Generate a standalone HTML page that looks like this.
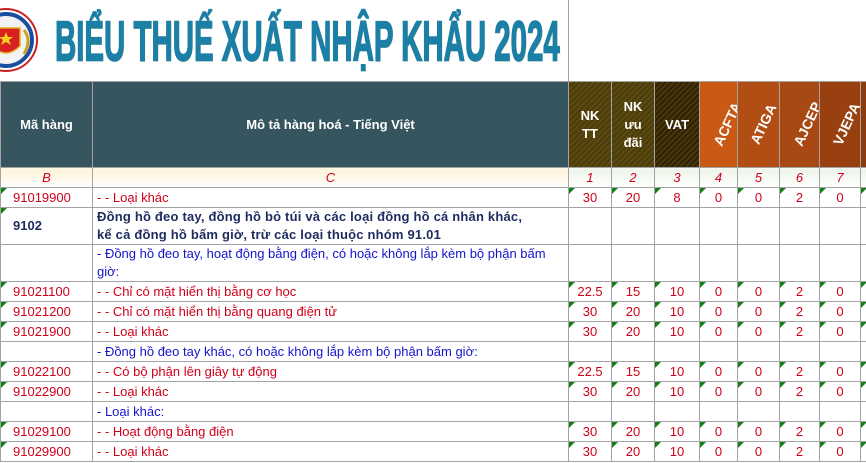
<!DOCTYPE html>
<html><head><meta charset="utf-8"><style>
*{margin:0;padding:0;box-sizing:border-box}
body{width:866px;height:463px;overflow:hidden;background:#fff;font-family:"Liberation Sans",sans-serif;position:relative}
.title{position:absolute;left:55px;top:9px;width:503px;height:64px;overflow:visible}
.title span{display:inline-block;font-family:"Liberation Sans Narrow","Liberation Sans",sans-serif;font-weight:bold;font-size:54px;color:#1b7fa6;letter-spacing:0px;transform-origin:0 0;transform:scaleX(0.545) scaleY(1.05);white-space:nowrap;text-shadow:1px 1px 0 #e8c9a8;-webkit-text-stroke:1.5px #1b7fa6}
.vline{position:absolute;left:568px;top:0;width:1px;height:81px;background:#a0a0a0}
table{position:absolute;left:0;top:81px;border-collapse:collapse;table-layout:fixed;width:880px}
td{border:1px solid #a3a3a3;font-size:13px;color:#d0001a;padding:0 4px;overflow:hidden;white-space:nowrap;position:relative}
tr.h td{height:86px;color:#fff;font-weight:bold;text-align:center;font-size:13px;line-height:18px}
.st1{background:repeating-linear-gradient(135deg,#2f5a5a 0 2px,#3c4f63 2px 4px)}
.st2{background:repeating-linear-gradient(135deg,#5c4a10 0 2px,#4a3c0c 2px 4px)}
.st3{background:repeating-linear-gradient(135deg,#4a380a 0 2px,#2e2206 2px 4px)}
.rot{display:inline-block;transform:rotate(-65deg);font-size:14px}
tr.n td{height:20px;text-align:center;font-style:italic;background:linear-gradient(#eef5ea,#fff)}
tr.n td.y{background:linear-gradient(#fff2d8,#fff)}
tr.r td{height:20px}
td.c{text-align:center}
td.k{padding-left:12px}
td.t::before{content:"";position:absolute;left:0;top:0;border-top:6px solid #128012;border-right:6px solid transparent}
.b{color:#1d2b5e;font-weight:bold}
td.b2{letter-spacing:0.2px}
.bl{color:#1515cc}
tr.tw td{height:37px;white-space:normal;line-height:18px}
</style></head><body>
<svg style="position:absolute;left:0;top:8px" width="40" height="65" viewBox="0 0 40 65">
<circle cx="6" cy="32" r="31" fill="#fff" stroke="#c22" stroke-width="2"/>
<circle cx="6" cy="32" r="26" fill="#f3f3f3" stroke="#1a4fa0" stroke-width="4"/>
<path d="M-8 20 L20 20 L20 38 Q6 52 -8 38Z" fill="#d82020" stroke="#e6b020" stroke-width="1.5"/>
<polygon points="6,24 8,29 13,29 9,32 11,37 6,34 1,37 3,32 -1,29 4,29" fill="#f5d020"/>
<path d="M24 22 Q32 32 24 46" stroke="#d0a020" stroke-width="3" fill="none"/>
</svg>
<div class="title"><span>BIỂU THUẾ XUẤT NHẬP KHẨU 2024</span></div>
<div class="vline"></div>
<table>
<colgroup><col style="width:92px"><col style="width:476px"><col style="width:43px"><col style="width:43px"><col style="width:45px"><col style="width:38px"><col style="width:42px"><col style="width:40px"><col style="width:41px"><col style="width:20px"></colgroup>
<tr class="h">
<td class="st1">Mã hàng</td><td class="st1">Mô tả hàng hoá - Tiếng Việt</td>
<td class="st2">NK<br>TT</td><td class="st2">NK<br>ưu<br>đãi</td><td class="st3">VAT</td>
<td style="background:#c85a16"><span class="rot">ACFTA</span></td>
<td style="background:#b24e13"><span class="rot">ATIGA</span></td>
<td style="background:#a84812"><span class="rot">AJCEP</span></td>
<td style="background:#984010"><span class="rot">VJEPA</span></td>
<td style="background:#8c3a0e"></td></tr>
<tr class="n"><td class="y">B</td><td class="y">C</td><td>1</td><td>2</td><td>3</td><td>4</td><td>5</td><td>6</td><td>7</td><td></td></tr>
<tr class="r"><td class="k t">91019900</td><td>- - Loại khác</td><td class="c t">30</td><td class="c t">20</td><td class="c t">8</td><td class="c t">0</td><td class="c t">0</td><td class="c t">2</td><td class="c t">0</td><td class="t"></td></tr>
<tr class="tw"><td class="k t b">9102</td><td class="b b2">Đồng hồ đeo tay, đồng hồ bỏ túi và các loại đồng hồ cá nhân khác,<br>kể cả đồng hồ bấm giờ, trừ các loại thuộc nhóm 91.01</td><td></td><td></td><td></td><td></td><td></td><td></td><td></td><td></td></tr>
<tr class="tw"><td></td><td class="bl">- Đồng hồ đeo tay, hoạt động bằng điện, có hoặc không lắp kèm bộ phận bấm giờ:</td><td></td><td></td><td></td><td></td><td></td><td></td><td></td><td></td></tr>
<tr class="r"><td class="k t">91021100</td><td>- - Chỉ có mặt hiển thị bằng cơ học</td><td class="c t">22.5</td><td class="c t">15</td><td class="c t">10</td><td class="c t">0</td><td class="c t">0</td><td class="c t">2</td><td class="c t">0</td><td class="t"></td></tr>
<tr class="r"><td class="k t">91021200</td><td>- - Chỉ có mặt hiển thị bằng quang điện tử</td><td class="c t">30</td><td class="c t">20</td><td class="c t">10</td><td class="c t">0</td><td class="c t">0</td><td class="c t">2</td><td class="c t">0</td><td class="t"></td></tr>
<tr class="r"><td class="k t">91021900</td><td>- - Loại khác</td><td class="c t">30</td><td class="c t">20</td><td class="c t">10</td><td class="c t">0</td><td class="c t">0</td><td class="c t">2</td><td class="c t">0</td><td class="t"></td></tr>
<tr class="r"><td></td><td class="bl">- Đồng hồ đeo tay khác, có hoặc không lắp kèm bộ phận bấm giờ:</td><td></td><td></td><td></td><td></td><td></td><td></td><td></td><td></td></tr>
<tr class="r"><td class="k t">91022100</td><td>- - Có bộ phận lên giây tự động</td><td class="c t">22.5</td><td class="c t">15</td><td class="c t">10</td><td class="c t">0</td><td class="c t">0</td><td class="c t">2</td><td class="c t">0</td><td class="t"></td></tr>
<tr class="r"><td class="k t">91022900</td><td>- - Loại khác</td><td class="c t">30</td><td class="c t">20</td><td class="c t">10</td><td class="c t">0</td><td class="c t">0</td><td class="c t">2</td><td class="c t">0</td><td class="t"></td></tr>
<tr class="r"><td></td><td class="bl">- Loại khác:</td><td></td><td></td><td></td><td></td><td></td><td></td><td></td><td></td></tr>
<tr class="r"><td class="k t">91029100</td><td>- - Hoạt động bằng điện</td><td class="c t">30</td><td class="c t">20</td><td class="c t">10</td><td class="c t">0</td><td class="c t">0</td><td class="c t">2</td><td class="c t">0</td><td class="t"></td></tr>
<tr class="r"><td class="k t">91029900</td><td>- - Loại khác</td><td class="c t">30</td><td class="c t">20</td><td class="c t">10</td><td class="c t">0</td><td class="c t">0</td><td class="c t">2</td><td class="c t">0</td><td class="t"></td></tr>
</table>
</body></html>
